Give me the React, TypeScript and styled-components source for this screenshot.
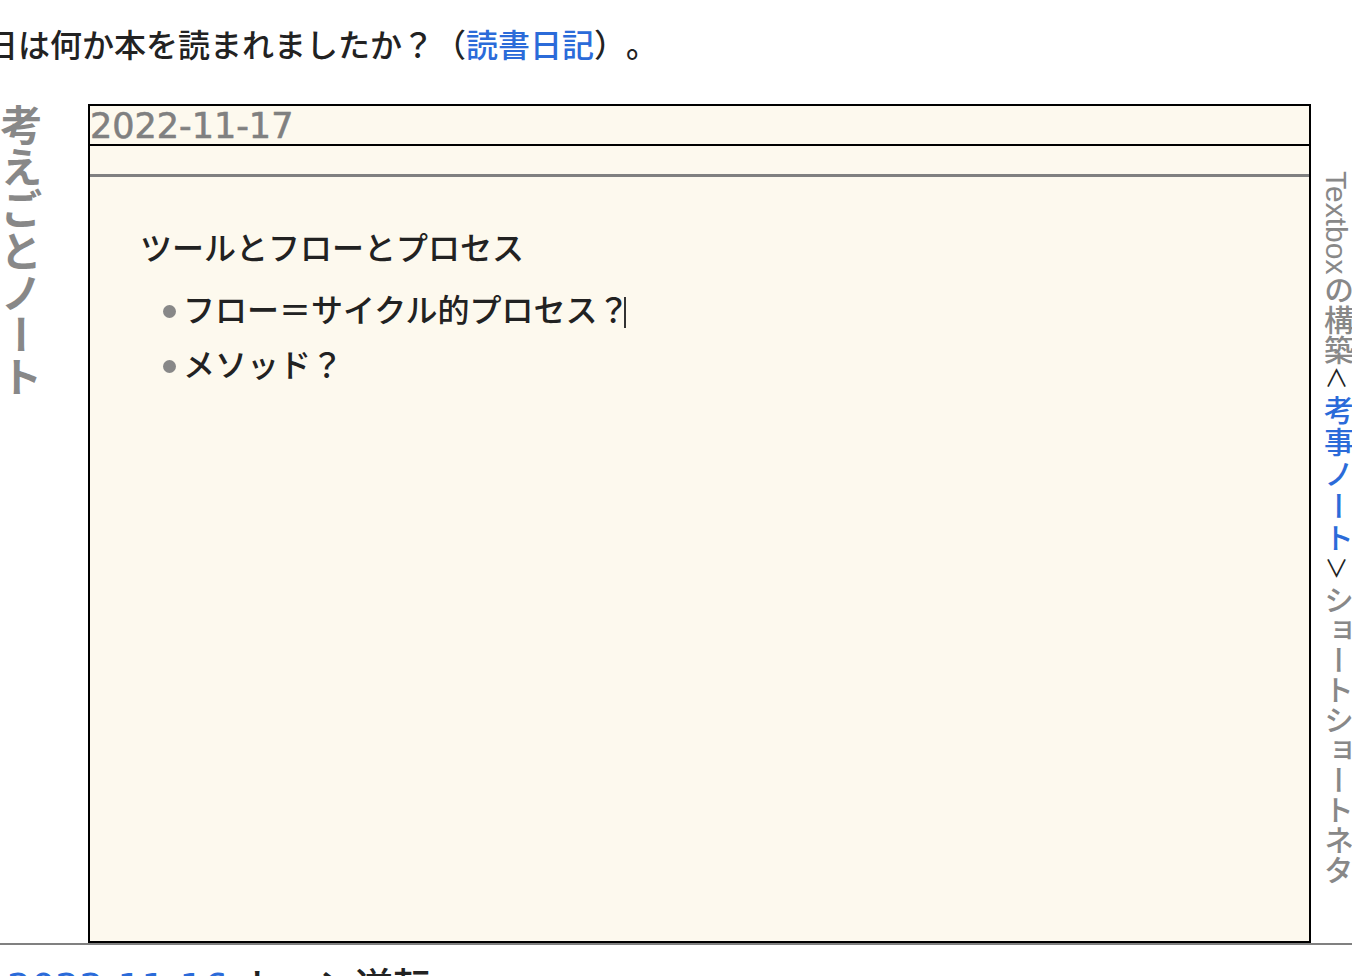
import React from "react";
import styled, { createGlobalStyle } from "styled-components";

const GlobalStyle = createGlobalStyle`
  html, body {
    margin: 0;
    padding: 0;
    background: #ffffff;
  }
  body {
    font-family: "Noto Sans CJK JP", sans-serif;
    font-weight: 500;
    color: #222222;
    overflow: hidden;
    text-spacing-trim: space-all;
  }
`;

const Page = styled.div`
  width: 1352px;
  height: 976px;
  overflow: hidden;
`;

const Intro = styled.p`
  margin: 20px 0 0 -46px;
  font-size: 32px;
  line-height: 46px;
  white-space: nowrap;
`;

const Link = styled.a`
  color: #2b6bd9;
  text-decoration: none;
`;

const Section = styled.section`
  margin-top: 38px;
  display: flex;
  border-bottom: 2px solid #808080;
`;

const SideColumn = styled.div`
  flex: none;
  width: 88px;
`;

const SideTitle = styled.h1`
  margin: 0;
  writing-mode: vertical-rl;
  height: max-content;
  font-size: 42px;
  line-height: 42px;
  font-weight: 700;
  color: #888888;
`;

const Box = styled.div`
  flex: none;
  width: 1223px;
  height: 839px;
  box-sizing: border-box;
  border: 2px solid #000000;
  background: #fdf9ee;
  display: flex;
  flex-direction: column;
`;

const DateRow = styled.div`
  height: 37px;
  padding-top: 1px;
  font-family: "DejaVu Sans", sans-serif;
  font-size: 35px;
  line-height: 38px;
  color: #808080;
  -webkit-text-stroke: 0.6px #808080;
  border-bottom: 2px solid #000000;
  white-space: nowrap;
`;

const TitleRow = styled.div`
  height: 28px;
  border-bottom: 3px solid #808080;
`;

const Content = styled.div`
  flex: 1;
  padding: 44px 50px;
  font-size: 32px;
`;

const Heading = styled.p`
  margin: 0;
  line-height: 50px;
`;

const List = styled.ul`
  list-style: none;
  margin: 10px 0 0;
  padding: 0 0 0 23px;
`;

const Item = styled.li`
  line-height: 55px;
  white-space: nowrap;
  &::before {
    content: "";
    display: inline-block;
    width: 13px;
    height: 13px;
    margin-right: 7px;
    vertical-align: 0.12em;
    border-radius: 50%;
    background: #888888;
  }
`;

const Cursor = styled.span`
  display: inline-block;
  width: 1.5px;
  height: 31px;
  margin-left: -5px;
  vertical-align: -0.2em;
  background: #333333;
`;

const NavColumn = styled.div`
  flex: 1;
  padding: 67px 0 0 10px;
`;

const Nav = styled.nav`
  writing-mode: vertical-rl;
  height: max-content;
  font-family: "Liberation Sans", "Noto Sans CJK JP", sans-serif;
  font-size: 30px;
  line-height: 30px;
  color: #888888;
`;

const NavLink = styled.a`
  color: #2b6bd9;
  text-decoration: none;
  letter-spacing: 2px;
`;

const Arrow = styled.span`
  display: inline-block;
  font-family: "Noto Sans CJK JP", sans-serif;
  font-weight: 400;
  font-size: 24px;
  text-orientation: upright;
  margin: 2px 0 4px;
  color: #222222;
`;

const NextHeading = styled.h2`
  margin: 16px 0 0 7px;
  font-size: 38px;
  line-height: 46px;
  font-weight: 500;
  white-space: nowrap;
`;

const NextDate = styled.a`
  font-family: "DejaVu Sans", sans-serif;
  color: #2b6bd9;
  text-decoration: none;
`;

const NextTitle = styled.span`
  margin-left: 15px;
  color: #222222;
`;

export default function App() {
  return (
    <Page>
      <GlobalStyle />
      <Intro>
        今日は何か本を読まれましたか？（<Link href="#">読書日記</Link>）。
      </Intro>
      <Section>
        <SideColumn>
          <SideTitle>考えごとノート</SideTitle>
        </SideColumn>
        <Box>
          <DateRow>2022-11-17</DateRow>
          <TitleRow />
          <Content>
            <Heading>ツールとフローとプロセス</Heading>
            <List>
              <Item>
                フロー＝サイクル的プロセス？
                <Cursor />
              </Item>
              <Item>メソッド？</Item>
            </List>
          </Content>
        </Box>
        <NavColumn>
          <Nav>
            Textboxの構築
            <Arrow>∧</Arrow>
            <NavLink href="#">考事ノート</NavLink>
            <Arrow>∨</Arrow>
            ショートショートネタ
          </Nav>
        </NavColumn>
      </Section>
      <NextHeading>
        <NextDate href="#">2022-11-16</NextDate>
        <NextTitle>トーン逆転</NextTitle>
      </NextHeading>
    </Page>
  );
}
